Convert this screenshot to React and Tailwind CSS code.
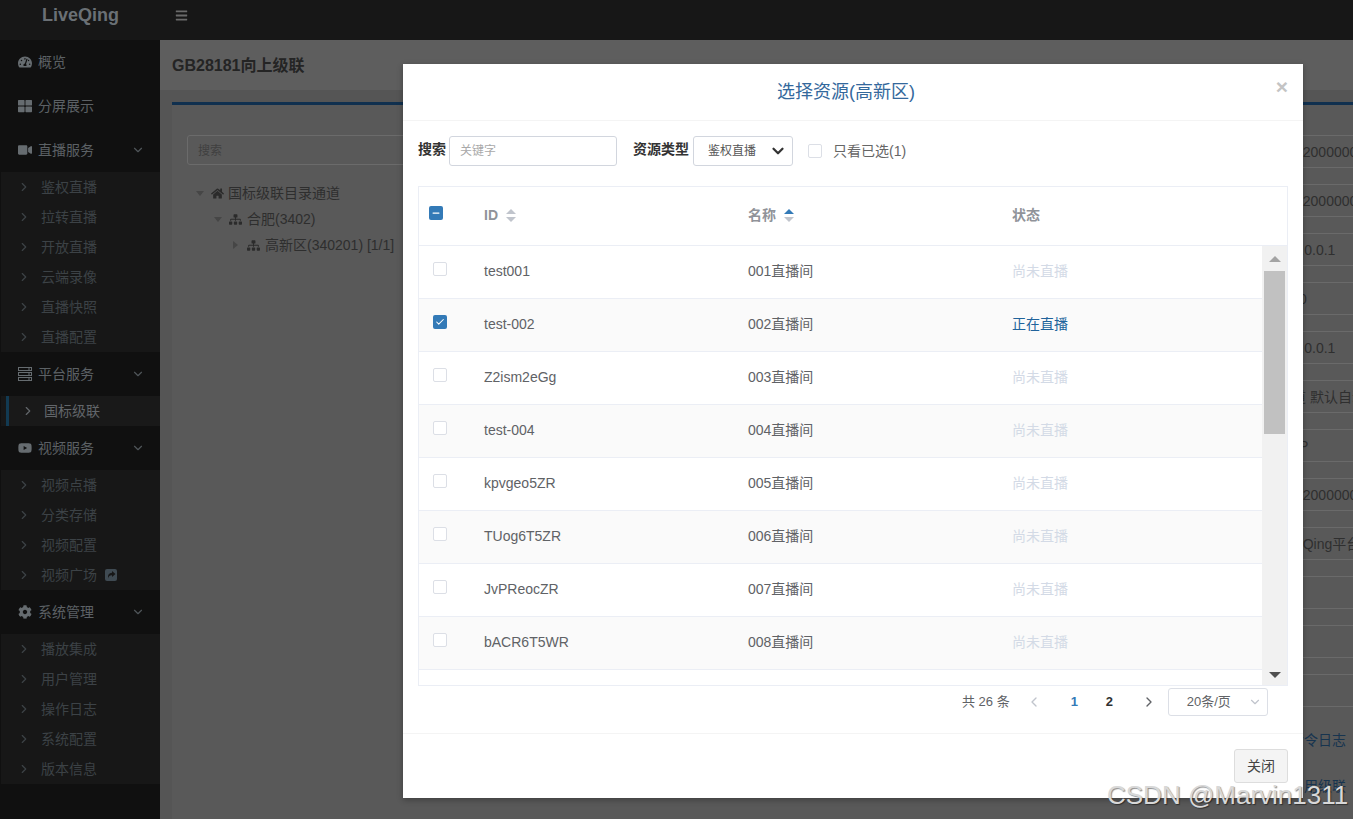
import { ChevronDown, ChevronRight, ChevronLeft, Check, Minus } from 'lucide-react';
import { FaBars, FaCog, FaHome, FaSitemap, FaTachometerAlt, FaThLarge, FaVideo, FaYoutube } from 'react-icons/fa';

function ServerIcon({ className }) {
  return (
    <svg viewBox="0 0 14 14" className={className} fill="none" stroke="currentColor">
      <rect x="0.5" y="0.5" width="13" height="3" />
      <rect x="0.5" y="5.5" width="13" height="3" />
      <rect x="0.5" y="10.5" width="13" height="3" />
      <path d="M10 2h2M10 7h2M10 12h2" />
    </svg>
  );
}

function ShareIcon() {
  return (
    <span className="ml-2 w-3 h-3 rounded-[2px] bg-[#3f4a52] flex items-center justify-center">
      <svg viewBox="0 0 12 12" className="w-3 h-3" fill="#171717">
        <path d="M7 2l3.5 3L7 8V6.3C5 6.2 3.6 7 3 9.5 2.6 6 4 4 7 3.8z" />
      </svg>
    </span>
  );
}

const MENU = [
  { label: '概览', icon: FaTachometerAlt },
  { label: '分屏展示', icon: FaThLarge },
  { label: '直播服务', icon: FaVideo, subs: ['鉴权直播', '拉转直播', '开放直播', '云端录像', '直播快照', '直播配置'] },
  { label: '平台服务', icon: ServerIcon, subs: ['国标级联'], active: true },
  { label: '视频服务', icon: FaYoutube, subs: ['视频点播', '分类存储', '视频配置', '视频广场'] },
  { label: '系统管理', icon: FaCog, subs: ['播放集成', '用户管理', '操作日志', '系统配置', '版本信息'] },
];

const ROWS = [
  { id: 'test001', name: '001直播间' },
  { id: 'test-002', name: '002直播间', live: true, checked: true },
  { id: 'Z2ism2eGg', name: '003直播间' },
  { id: 'test-004', name: '004直播间' },
  { id: 'kpvgeo5ZR', name: '005直播间' },
  { id: 'TUog6T5ZR', name: '006直播间' },
  { id: 'JvPReocZR', name: '007直播间' },
  { id: 'bACR6T5WR', name: '008直播间' },
];

// form fields behind the dialog, only their right ends show
const FIELDS = [
  { text: '32000000', cls: 'ml-[408px]' },
  { text: '32000000', cls: 'ml-[408px]' },
  { text: '127.0.0.1', cls: 'ml-[390px]' },
  { text: '0', cls: 'ml-[412px]' },
  { text: '127.0.0.1', cls: 'ml-[390px]' },
  { text: '道 默认自动', cls: 'ml-[405px]' },
  { text: 'P', cls: 'ml-[412px]' },
  { text: '32000000', cls: 'ml-[408px]' },
  { text: 'LiveQing平台', cls: 'ml-[390px]' },
  { text: '' },
  { text: '' },
  { text: '' },
];

function Sidebar() {
  return (
    <div className="w-40 shrink-0 bg-[#101010] h-[779px]">
      {MENU.map(m => {
        const Icon = m.icon;
        return (
          <div key={m.label}>
            <div className="flex items-center h-11 pl-[18px] text-[#5c6165] text-sm">
              <Icon className="w-[14px] h-[14px] text-[#666c70] shrink-0" />
              <span className="ml-[6px]">{m.label}</span>
              {m.subs && <ChevronDown className="w-[14px] h-[14px] ml-auto mr-[15px] text-[#50565a]" />}
            </div>
            {m.subs && (
              <div className="ml-px bg-[#171717]">
                {m.subs.map(s => (
                  m.active ? (
                    <div key={s} className="flex items-center h-[30px] ml-[5px] pl-[12px] border-l-[3px] border-[#123a52] text-sm text-[#62666a] bg-[#191919]">
                      <ChevronRight className="w-[14px] h-[14px] text-[#62666a] shrink-0" />
                      <span className="ml-[9px]">{s}</span>
                    </div>
                  ) : (
                    <div key={s} className="flex items-center h-[30px] pl-[16px] text-sm text-[#3c4246]">
                      <ChevronRight className="w-[14px] h-[14px] shrink-0" />
                      <span className="ml-[10px]">{s}</span>
                      {s === '视频广场' && <ShareIcon />}
                    </div>
                  )
                ))}
              </div>
            )}
          </div>
        );
      })}
    </div>
  );
}

function TreeLine({ arrow, icon: Icon, text, cls, textCls = 'ml-[5px]' }) {
  return (
    <div className={`flex items-center h-[26px] text-sm text-[#2e2e2e] ${cls}`}>
      {arrow === 'down'
        ? <span className="w-0 h-0 border-x-[4px] border-x-transparent border-t-[5px] border-t-[#464646]" />
        : <span className="w-0 h-0 border-y-[4px] border-y-transparent border-l-[5px] border-l-[#464646] ml-[1px] mr-[2px]" />}
      <Icon className="w-[13px] h-[13px] ml-[7px] text-[#2b2b2b] shrink-0" />
      <span className={`${textCls} whitespace-nowrap`}>{text}</span>
    </div>
  );
}

function Background() {
  return (
    <div className="flex-1 min-w-0 bg-[#555555] flex flex-col">
      <div className="h-[50px] bg-[#5e5e5e] flex items-center pl-3 pt-[2px] text-base font-bold text-[#242424] shrink-0">GB28181向上级联</div>
      <div className="flex-1 ml-3 mt-3 bg-[#595959] border-t-[3px] border-[#10304f] flex pl-[15px] pt-[30px]">
        <div className="w-[700px] shrink-0">
          <div className="h-[30px] border border-[#6b6b6b] rounded-[3px] flex items-center pl-[10px] pt-[2px] text-xs text-[#404040]">搜索</div>
          <div className="mt-[15px]">
            <TreeLine arrow="down" icon={FaHome} text="国标级联目录通道" cls="pl-[9px]" textCls="ml-1" />
            <TreeLine arrow="down" icon={FaSitemap} text="合肥(3402)" cls="pl-[27px]" />
            <TreeLine arrow="right" icon={FaSitemap} text="高新区(340201) [1/1]" cls="pl-[45px]" />
          </div>
        </div>
        <div className="flex-1 min-w-0 overflow-hidden">
          <div className="flex flex-col gap-4">
            {FIELDS.map((f, i) => (
              <div key={i} className="h-[33px] border-y border-[#6a6a6a] flex items-center text-sm text-[#2f2f2f] whitespace-nowrap">
                <span className={f.cls}>{f.text}</span>
              </div>
            ))}
          </div>
          <div className="mt-[23px] ml-[375px] text-sm leading-5 whitespace-nowrap text-[#17344f]">下发命令日志</div>
          <div className="mt-[26px] ml-[403px] text-sm leading-5 whitespace-nowrap text-[#17344f]">启用级联</div>
        </div>
      </div>
    </div>
  );
}

function Box({ checked, indeterminate }) {
  if (indeterminate) {
    return <span className="w-[14px] h-[14px] rounded-[2px] bg-[#337ab7] flex items-center justify-center"><Minus className="w-[10px] h-[10px] text-white" strokeWidth={3} /></span>;
  }
  if (checked) {
    return <span className="w-[14px] h-[14px] rounded-[2px] bg-[#337ab7] flex items-center justify-center"><Check className="w-[10px] h-[10px] text-white" strokeWidth={2.5} /></span>;
  }
  return <span className="block w-[14px] h-[14px] rounded-[2px] border border-[#dcdfe6] bg-white" />;
}

function Carets({ active }) {
  return (
    <span className="flex flex-col gap-[3px] ml-[8px]">
      <span className={`w-0 h-0 border-x-[5px] border-x-transparent border-b-[5px] ${active ? 'border-b-[#337ab7]' : 'border-b-[#c0c4cc]'}`} />
      <span className="w-0 h-0 border-x-[5px] border-x-transparent border-t-[5px] border-t-[#c0c4cc]" />
    </span>
  );
}

function Dialog() {
  return (
    <div className="absolute left-[403px] top-16 w-[900px] h-[734px] bg-white shadow-[0_2px_6px_rgba(0,0,0,0.3)] flex flex-col">
      <div className="relative h-[57px] shrink-0 border-b border-[#f4f4f4] flex items-center justify-center pr-[14px] text-lg text-[#34689c]">
        选择资源(高新区)
        <span className="absolute right-[15px] top-[10px] text-[21px] leading-[26px] font-bold text-[#c4c4c4]">×</span>
      </div>

      <div className="flex items-center h-[30px] mt-[15px] pl-[15px] text-sm">
        <span className="font-bold text-[#333333] -mt-1">搜索</span>
        <div className="ml-[3px] w-[168px] h-[30px] border border-[#d2d6de] rounded-[3px] flex items-center pl-[10px] text-xs text-[#a9a9a9]">关键字</div>
        <span className="ml-4 font-bold text-[#333333] -mt-1">资源类型</span>
        <div className="ml-1 w-[100px] h-[30px] border border-[#d2d6de] rounded-[3px] flex items-center pl-[14px] text-xs text-[#555555]">
          鉴权直播
          <ChevronDown className="w-[18px] h-[18px] ml-auto mr-[5px] text-[#333333]" strokeWidth={3} />
        </div>
        <span className="ml-[15px]"><Box /></span>
        <span className="ml-[11px] text-[#666666]">只看已选(1)</span>
      </div>

      <div className="mx-[15px] mt-5 h-[500px] border border-[#ebeef5] flex flex-col text-sm">
        <div className="h-[59px] shrink-0 border-b border-[#ebeef5] flex items-center pb-[2px] font-bold text-[#909399]">
          <span className="w-[65px] pl-[10px] -mt-1"><Box indeterminate /></span>
          <span className="w-[264px] flex items-center">ID<Carets /></span>
          <span className="w-[264px] flex items-center">名称<Carets active /></span>
          <span>状态</span>
        </div>
        <div className="flex flex-1 min-h-0">
          <div className="flex-1 min-w-0 overflow-hidden">
            {ROWS.map((r, i) => (
              <div key={r.id} className={`h-[53px] border-b border-[#ebeef5] flex items-center pb-[2px] text-[#606266] ${i % 2 ? 'bg-[#fafafa]' : 'bg-white'}`}>
                <span className="w-[65px] pl-[14px] -mt-1"><Box checked={r.checked} /></span>
                <span className="w-[264px]">{r.id}</span>
                <span className="w-[264px]">{r.name}</span>
                <span className={r.live ? 'text-[#20639b]' : 'text-[#d3dae6]'}>{r.live ? '正在直播' : '尚未直播'}</span>
              </div>
            ))}
          </div>
          <div className="w-[25px] shrink-0 bg-[#f1f1f1] flex flex-col items-center relative">
            <span className="mt-[10px] w-0 h-0 border-x-[6px] border-x-transparent border-b-[6px] border-b-[#a3a3a3]" />
            <span className="absolute left-[2px] top-[25px] w-[21px] h-[163px] bg-[#c1c1c1]" />
            <span className="mt-auto mb-[7px] w-0 h-0 border-x-[6px] border-x-transparent border-t-[6px] border-t-[#505050]" />
          </div>
        </div>
      </div>

      <div className="flex items-center h-7 mt-[2px] text-[13px] text-[#606266]">
        <span className="ml-[559px]">共 26 条</span>
        <ChevronLeft className="w-4 h-4 ml-4 text-[#c0c4cc]" />
        <span className="ml-[29px] w-[8px] font-bold text-[#337ab7]">1</span>
        <span className="ml-[27px] w-[8px] font-bold text-[#303133]">2</span>
        <ChevronRight className="w-4 h-4 ml-[27px] text-[#606266]" />
        <div className="ml-[11px] w-[100px] h-7 border border-[#dcdfe6] rounded-[3px] flex items-center pl-[18px]">
          20条/页
          <ChevronDown className="w-[14px] h-[14px] ml-auto mr-[5px] text-[#c0c4cc]" />
        </div>
      </div>

      <div className="mt-[17px] h-[65px] border-t border-[#f4f4f4] flex justify-end items-start pt-[15px] pr-[15px]">
        <div className="w-[54px] h-[34px] bg-[#f4f4f4] border border-[#dddddd] rounded-[3px] flex items-center justify-center text-sm text-[#444444]">关闭</div>
      </div>
    </div>
  );
}

export default function App() {
  return (
    <div className="relative w-[1353px] h-[819px] overflow-hidden font-['Liberation_Sans','Noto_Sans_CJK_SC',sans-serif]">
      <div className="h-10 bg-[#171717] flex items-start">
        <div className="w-40 shrink-0 pl-[42px] pt-[5px] text-lg leading-5 font-bold text-[#6a7075]">LiveQing</div>
        <FaBars className="w-[13px] h-[13px] ml-[15px] mt-[9px] text-[#6a6a6a]" />
      </div>
      <div className="flex">
        <Sidebar />
        <Background />
      </div>
      <Dialog />
      <div className="absolute left-[1107px] top-[780px] text-[26px] leading-[30px] whitespace-nowrap text-[#d8d8d8] [text-shadow:1px_1px_1px_rgba(0,0,0,0.45)]">CSDN @Marvin1311</div>
    </div>
  );
}
